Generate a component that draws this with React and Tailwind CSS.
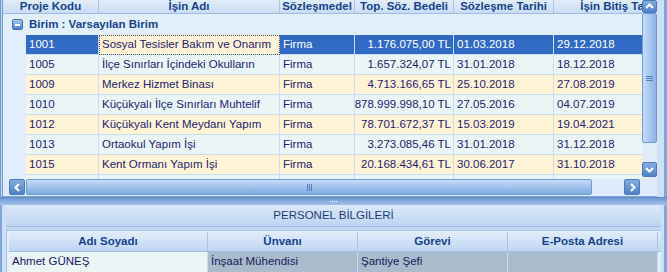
import React from "react";

const cols = [
  { key: "kod", title: "Proje Kodu", w: 73 },
  { key: "ad", title: "İşin Adı", w: 181 },
  { key: "tip", title: "Sözleşmedel", w: 75 },
  { key: "bedel", title: "Top. Söz. Bedeli", w: 99, right: true },
  { key: "tarih", title: "Sözleşme Tarihi", w: 100 },
  { key: "bitis", title: "İşin Bitiş Tarihi", w: 134 },
];

const projects = [
  { kod: "1001", ad: "Sosyal Tesisler Bakım ve Onarım", tip: "Firma", bedel: "1.176.075,00 TL", tarih: "01.03.2018", bitis: "29.12.2018" },
  { kod: "1005", ad: "İlçe Sınırları İçindeki Okulların", tip: "Firma", bedel: "1.657.324,07 TL", tarih: "31.01.2018", bitis: "18.12.2018" },
  { kod: "1009", ad: "Merkez Hizmet Binası", tip: "Firma", bedel: "4.713.166,65 TL", tarih: "25.10.2018", bitis: "27.08.2019" },
  { kod: "1010", ad: "Küçükyalı İlçe Sınırları Muhtelif", tip: "Firma", bedel: "878.999.998,10 TL", tarih: "27.05.2016", bitis: "04.07.2019" },
  { kod: "1012", ad: "Küçükyalı Kent Meydanı Yapım", tip: "Firma", bedel: "78.701.672,37 TL", tarih: "15.03.2019", bitis: "19.04.2021" },
  { kod: "1013", ad: "Ortaokul Yapım İşi", tip: "Firma", bedel: "3.273.085,46 TL", tarih: "31.01.2018", bitis: "31.12.2018" },
  { kod: "1015", ad: "Kent Ormanı Yapım İşi", tip: "Firma", bedel: "20.168.434,61 TL", tarih: "30.06.2017", bitis: "31.10.2018" },
  { kod: "", ad: "", tip: "", bedel: "", tarih: "", bitis: "" },
];

function Chevron({ dir }) {
  const d = {
    up: "M3 8 L6.5 4.5 L10 8",
    down: "M3 5 L6.5 8.5 L10 5",
    left: "M8 3 L4.5 6.5 L8 10",
    right: "M5 3 L8.5 6.5 L5 10",
  }[dir];
  return (
    <svg width="13" height="13" viewBox="0 0 13 13">
      <path d={d} fill="none" stroke="white" strokeWidth="2" />
    </svg>
  );
}

function ScrollButton({ dir, className }) {
  return (
    <div
      className={
        "flex items-center justify-center rounded-[2px] border border-[#4a79bd] bg-gradient-to-b from-[#86acdf] to-[#4f80c6] " +
        className
      }
    >
      <Chevron dir={dir} />
    </div>
  );
}

function HeaderCell({ children, w, last }) {
  return (
    <div
      style={{ width: w }}
      className={
        "shrink-0 h-full flex items-center justify-center font-bold text-[#15428b] whitespace-nowrap overflow-hidden border-[#a6c3e8] " +
        (last ? "" : "border-r")
      }
    >
      {children}
    </div>
  );
}

function ProjectRow({ row, i }) {
  const selected = i === 0;
  const bg = i % 2 === 0 ? "bg-[#fff3d6]" : "bg-[#eaf5f5]";
  return (
    <div className="flex h-[20px] shrink-0">
      <div className="w-[23px] shrink-0 bg-[#e3eefc]" />
      {cols.map((c) => {
        const focused = selected && c.key === "ad";
        const cellBg = selected ? (focused ? "bg-[#fff3d6]" : "bg-[#316ac5]") : bg;
        const txt = selected && !focused ? "text-white" : "text-[#23236f]";
        return (
          <div
            key={c.key}
            style={{ width: c.w }}
            className={
              "shrink-0 h-full flex items-center whitespace-nowrap overflow-hidden border-r border-b border-[#c9dcf2] " +
              cellBg +
              " " +
              txt +
              (c.right ? " justify-end pr-[2px]" : " pl-[3px]") +
              (focused ? " outline-1 outline-dotted outline-offset-[-1px] outline-[#555]" : "")
            }
          >
            {row[c.key]}
          </div>
        );
      })}
    </div>
  );
}

export default function App() {
  return (
    <div
      className="w-[667px] h-[272px] overflow-hidden flex flex-col bg-[#c3d8f2] text-[11.5px] leading-none"
      style={{ fontFamily: '"Liberation Sans", Arial, sans-serif' }}
    >
      {/* top grid panel */}
      <div className="flex h-[197px] shrink-0">
        <div className="w-[3px] shrink-0 border-l border-r border-[#6e98d2] bg-[#c8dbf3]" />
        <div className="w-[654px] shrink-0 flex flex-col bg-[#dfeafa]">
          <div className="flex h-[179px] shrink-0">
            <div className="w-[639px] shrink-0 overflow-hidden flex flex-col">
              <div className="flex h-[14px] shrink-0 bg-gradient-to-b from-[#e2ecf9] to-[#c9dcf3] border-b border-[#9ebde5]">
                <HeaderCell w={96}>Proje Kodu</HeaderCell>
                {cols.slice(1).map((c, i) => (
                  <HeaderCell key={c.key} w={c.w} last={i === cols.length - 2}>
                    {c.title}
                  </HeaderCell>
                ))}
              </div>
              <div className="flex items-center h-[21px] shrink-0 bg-[#e3eefc] pl-[9px] gap-[6px] font-bold text-[#15428b]">
                <div className="w-[11px] h-[11px] rounded-[2px] border border-[#3f6fb5] bg-gradient-to-b from-[#a8c6ee] to-[#4f80c6] flex items-center justify-center">
                  <div className="w-[5px] h-[2px] bg-white" />
                </div>
                <span>Birim : Varsayılan Birim</span>
              </div>
              {projects.map((p, i) => (
                <ProjectRow key={i} row={p} i={i} />
              ))}
            </div>
            {/* vertical scrollbar */}
            <div className="w-[15px] shrink-0 flex flex-col bg-[#e1ecf9]">
              <ScrollButton dir="up" className="h-[13px] shrink-0" />
              <div className="h-[130px] shrink-0 rounded-[2px] border border-[#6f9ad3] bg-gradient-to-r from-[#c6dcf6] to-[#8cb3e6] flex items-center justify-center">
                <div className="w-[7px] flex flex-col gap-[1px]">
                  <div className="h-px bg-[#4f7fc0]" />
                  <div className="h-px bg-[#4f7fc0]" />
                  <div className="h-px bg-[#4f7fc0]" />
                </div>
              </div>
              <div className="flex-1" />
              <ScrollButton dir="down" className="h-[15px] shrink-0 mb-[2px]" />
            </div>
          </div>
          {/* horizontal scrollbar */}
          <div className="flex h-[16px] shrink-0 pl-[6px] items-stretch">
            <ScrollButton dir="left" className="w-[16px] shrink-0" />
            <div className="w-[566px] shrink-0 ml-[1px] rounded-[2px] border border-[#6f9ad3] bg-gradient-to-b from-[#c6dcf6] to-[#7faae2] flex items-center justify-center">
              <div className="h-[7px] flex gap-[1px]">
                <div className="w-px bg-[#4f7fc0]" />
                <div className="w-px bg-[#4f7fc0]" />
                <div className="w-px bg-[#4f7fc0]" />
              </div>
            </div>
            <div className="w-[32px] shrink-0" />
            <ScrollButton dir="right" className="w-[16px] shrink-0" />
          </div>
          <div className="flex-1 border-b border-[#7ea4d8]" />
        </div>
        <div className="w-[10px] shrink-0 bg-[#cfe0f5] border-r-[3px] border-[#7fa6dc]" />
      </div>

      {/* splitter */}
      <div className="h-[8px] shrink-0 border-t border-[#5f8bcb] bg-gradient-to-b from-[#6f98d2] to-[#a3c2ea] flex items-center justify-center">
        <div className="flex gap-[1px]">
          <div className="w-px h-px bg-white" />
          <div className="w-px h-px bg-white" />
          <div className="w-px h-px bg-white" />
          <div className="w-px h-px bg-white" />
        </div>
      </div>

      {/* bottom panel */}
      <div className="flex flex-1">
        <div className="w-[6px] shrink-0 border-l-[2px] border-[#7fa6dc] bg-[#cfe0f5]" />
        <div className="w-[655px] shrink-0 flex flex-col">
          <div className="h-[22px] shrink-0 flex items-center justify-center bg-gradient-to-b from-[#dce9f9] to-[#bcd4f1] border-b border-[#9ebde5] text-[#1e3c74]">
            PERSONEL BİLGİLERİ
          </div>
          <div className="h-[3px] shrink-0" />
          <div className="flex-1 border-t border-l border-[#a6c3e8] bg-[#e3eefc] pl-[2px] pt-[1px] flex flex-col">
            <div className="flex h-[20px] shrink-0 bg-gradient-to-b from-[#e2ecf9] to-[#bfd6f3] border-b border-[#9ebde5]">
              <HeaderCell w={199}>Adı Soyadı</HeaderCell>
              <HeaderCell w={150}>Ünvanı</HeaderCell>
              <HeaderCell w={150}>Görevi</HeaderCell>
              <HeaderCell w={150}>E-Posta Adresi</HeaderCell>
            </div>
            <div className="flex h-[20px] shrink-0 text-[#1a1a5c]">
              <div className="w-[199px] shrink-0 bg-[#eaf5f5] border-r border-[#c9dcf2] flex items-center pl-[3px]">Ahmet GÜNEŞ</div>
              <div className="w-[150px] shrink-0 bg-[#a9bccc] border-r border-[#c9dcf2] flex items-center pl-[3px]">İnşaat Mühendisi</div>
              <div className="w-[150px] shrink-0 bg-[#a9bccc] border-r border-[#c9dcf2] flex items-center pl-[3px]">Şantiye Şefi</div>
              <div className="w-[150px] shrink-0 bg-[#a9bccc] border-r border-[#c9dcf2]" />
            </div>
          </div>
        </div>
        <div className="w-[6px] shrink-0 bg-[#cfe0f5] border-r-[3px] border-[#7fa6dc]" />
      </div>
    </div>
  );
}
